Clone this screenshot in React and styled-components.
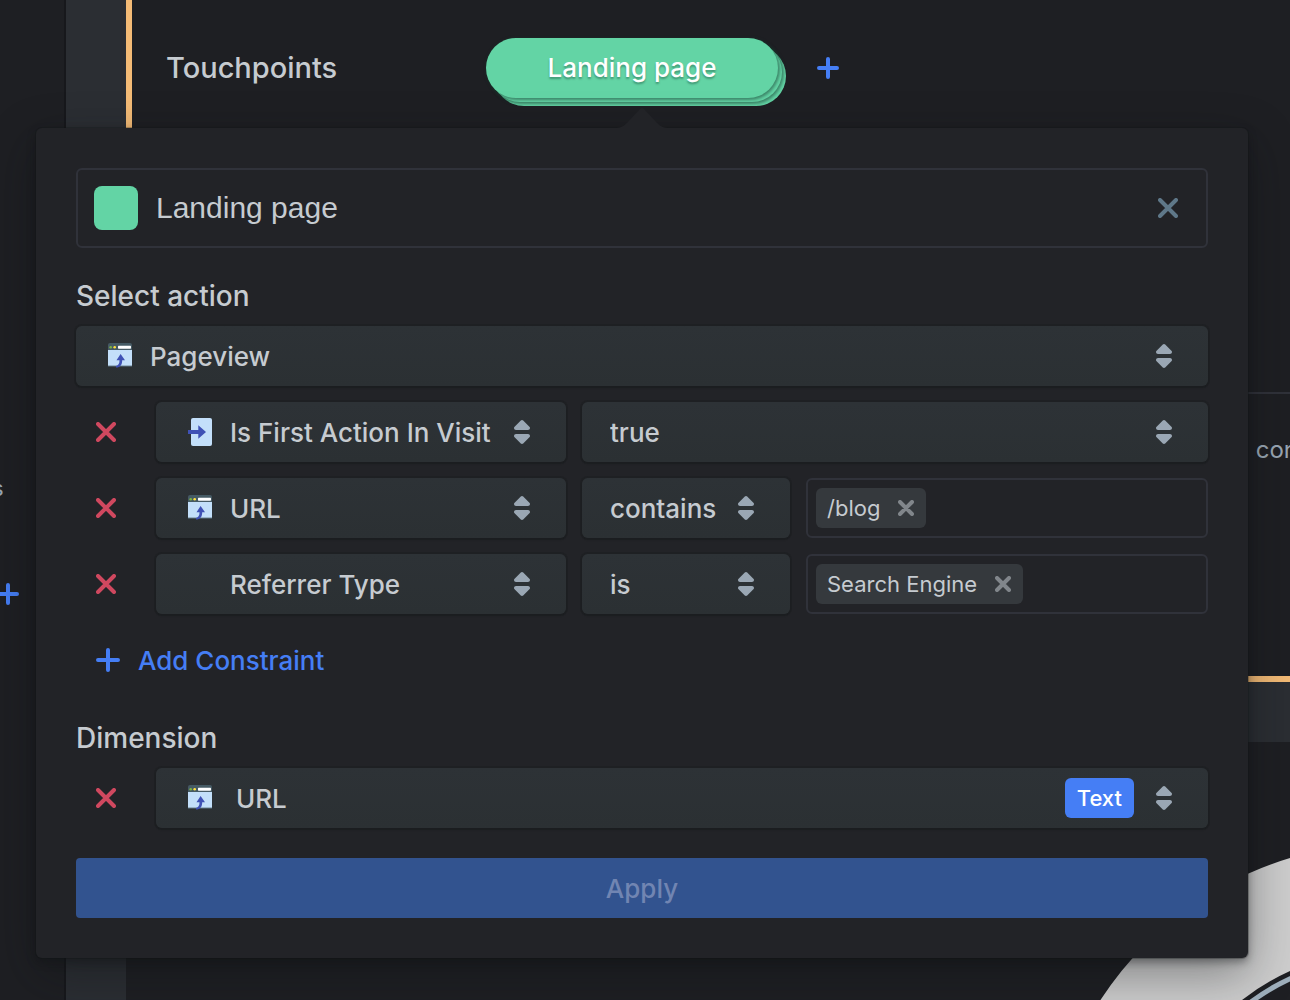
import React from 'react';
import styled, { createGlobalStyle, css } from 'styled-components';

const color = {
  page: '#1e1f23',
  band: '#2b2e33',
  panel: '#222327',
  line: '#30323a',
  text: '#c6cbd0',
  muted: '#9aa7b4',
  blue: '#457ef5',
  green: '#63d4a5',
  red: '#d0485f',
  orange: '#f4bb76',
};

const GlobalStyle = createGlobalStyle`
  *, *::before, *::after { box-sizing: border-box; }
  body {
    margin: 0;
    background: ${color.page};
    color: ${color.text};
    font-family: Inter, "Open Sans", sans-serif;
    font-size: 26px;
    font-weight: 500;
  }
  button, input, select { font: inherit; color: inherit; }
  svg { display: block; flex: none; }
`;

const Page = styled.div`
  position: relative;
  display: flex;
  height: 100vh;
  overflow: hidden;
`;

const Rail = styled.aside`
  flex: none;
  width: 66px;
  padding-top: 472px;
  border-right: 2px solid #17181c;
`;

const RailItems = styled.div`
  display: flex;
  flex-direction: column;
  gap: 80px;
  margin-left: -8px;
  font-size: 22px;
  font-weight: 400;
  line-height: 32px;
  color: ${color.muted};
`;

const Main = styled.main`
  flex: 1;
  min-width: 0;
  display: flex;
  flex-direction: column;
  gap: 60px;
  padding-left: 60px;
  background: ${color.band};
`;

const Card = styled.section`
  flex: none;
  border: solid ${color.orange};
  border-width: 0 0 6px 6px;
  background: ${color.page};
`;

const TouchpointRow = styled.div`
  display: flex;
  align-items: flex-start;
  min-height: 392px;
  padding: 38px 34px;
`;

const RowTitle = styled.h2`
  width: 320px;
  margin: 0;
  font-size: 29px;
  font-weight: 500;
  line-height: 60px;
`;

const StackedPill = styled.button`
  width: 292px;
  height: 60px;
  margin-right: 39px;
  padding: 0 0 2px;
  border: 0;
  border-radius: 30px;
  background: ${color.green};
  box-shadow:
    1px 1px 3px 1px rgba(24, 60, 48, 0.5),
    4px 4px 0 ${color.green},
    5px 5px 3px 1px rgba(24, 60, 48, 0.5),
    8px 8px 0 ${color.green};
  color: #fff;
  text-shadow: 0 2px 2px rgba(16, 60, 44, 0.4);
`;

const DetailRow = styled.div`
  display: flex;
  justify-content: flex-end;
  min-height: 284px;
  padding-top: 40px;
  border-top: 2px solid ${color.line};
  font-size: 24px;
  font-weight: 400;
  line-height: 32px;
  color: ${color.muted};
`;

const DetailText = styled.span`
  margin-right: -8px;
`;

const ChartSection = styled.section`
  flex: 1;
  display: flex;
  justify-content: flex-end;
  align-items: flex-start;
  padding-top: 102px;
  background: ${color.page};
`;

const ChartFrame = styled.div`
  margin-right: -438px;
`;

const IconButton = styled.button`
  display: flex;
  align-items: center;
  height: ${p => p.$height || 60}px;
  padding: 0;
  border: 0;
  background: none;
  color: ${p => p.$color};
`;

const RailButton = styled(IconButton)`
  width: 32px;
  justify-content: center;
`;

const Popover = styled.form`
  position: absolute;
  top: 128px;
  left: 36px;
  right: 42px;
  padding: 40px;
  border-radius: 6px;
  background: ${color.panel};
  box-shadow:
    0 0 0 1px rgba(16, 18, 20, 0.25),
    0 4px 8px rgba(16, 18, 20, 0.4),
    0 16px 48px rgba(16, 18, 20, 0.4);
`;

const PopoverTip = styled.svg`
  position: absolute;
  bottom: 100%;
  left: 50%;
  margin: 0 0 -1px -28px;
`;

const fieldFrame = css`
  display: flex;
  align-items: center;
  border: 2px solid ${color.line};
  border-radius: 6px;
`;

const NameField = styled.div`
  ${fieldFrame}
  height: 80px;
  padding: 0 28px 0 16px;
`;

const Swatch = styled.button`
  flex: none;
  width: 44px;
  height: 44px;
  padding: 0;
  border: 0;
  border-radius: 8px;
  background: ${color.green};
`;

const NameInput = styled.input`
  flex: 1;
  min-width: 0;
  padding: 0 18px;
  border: 0;
  outline: 0;
  background: none;
  font-family: "Liberation Sans", Arial, sans-serif;
  font-size: 30px;
  font-weight: 400;
`;

const SectionTitle = styled.h3`
  margin: 30px 0 12px;
  font-size: 28px;
  font-weight: 500;
  line-height: 36px;
`;

const Rows = styled.div`
  display: flex;
  flex-direction: column;
  gap: 16px;
`;

const Row = styled.div`
  display: flex;
  gap: 16px;
`;

const RemoveButton = styled(IconButton)`
  flex: none;
  width: 64px;
  padding-left: 20px;
`;

const SelectBox = styled.div`
  flex: ${p => (p.$width ? 'none' : 1)};
  width: ${p => (p.$width ? `${p.$width}px` : 'auto')};
  min-width: 0;
  display: grid;
  grid-template-columns: auto 1fr auto;
  align-items: center;
  height: 60px;
  border-radius: 6px;
  background: linear-gradient(#2d3236, #2b3033);
  box-shadow: 0 0 0 2px rgba(16, 18, 20, 0.2), 0 2px 2px rgba(16, 18, 20, 0.15);
`;

const NativeSelect = styled.select`
  grid-area: 1 / 1 / 2 / -1;
  width: 100%;
  height: 60px;
  padding: 1px 36px 0 ${p => p.$inset}px;
  border: 0;
  outline: 0;
  border-radius: 6px;
  appearance: none;
  background: none;
`;

const LeadingIcon = styled.span`
  grid-area: 1 / 1;
  padding-left: 32px;
  pointer-events: none;
`;

const Trailing = styled.span`
  grid-area: 1 / 3;
  display: flex;
  align-items: center;
  gap: 22px;
  padding-right: 36px;
  pointer-events: none;
`;

const TypeBadge = styled.span`
  padding: 0 12px;
  border-radius: 6px;
  background: ${color.blue};
  color: #fff;
  font-size: 22px;
  line-height: 40px;
`;

const TagField = styled.div`
  ${fieldFrame}
  flex: 1;
  min-width: 0;
  height: 60px;
  padding: 0 8px;
`;

const Tag = styled.span`
  flex: none;
  display: flex;
  align-items: center;
  gap: 18px;
  height: 40px;
  padding: 0 12px 0 11px;
  border-radius: 6px;
  background: #35393d;
  font-size: 22px;
  font-weight: 400;
`;

const TagInput = styled.input`
  flex: 1;
  min-width: 0;
  padding: 0 8px;
  border: 0;
  outline: 0;
  background: none;
  font-size: 22px;
`;

const AddButton = styled(IconButton)`
  gap: 18px;
  padding-left: 20px;
`;

const ApplyButton = styled.button`
  display: block;
  width: 100%;
  height: 60px;
  margin-top: 30px;
  padding: 0;
  border: 0;
  border-radius: 4px;
  background: #32538f;
  color: #7185b2;
`;

const Cross = ({ size = 20, stroke = 4 }) => (
  <svg width={size} height={size} viewBox={`0 0 ${size} ${size}`} fill="none" stroke="currentColor" strokeWidth={stroke} strokeLinecap="round" aria-hidden="true">
    <path d={`M2 2L${size - 2} ${size - 2}M${size - 2} 2L2 ${size - 2}`} />
  </svg>
);

const Plus = ({ size = 22 }) => (
  <svg width={size} height={size} viewBox={`0 0 ${size} ${size}`} fill="none" stroke="currentColor" strokeWidth="4" strokeLinecap="round" aria-hidden="true">
    <path d={`M2 ${size / 2}H${size - 2}M${size / 2} 2V${size - 2}`} />
  </svg>
);

const DoubleCaret = () => (
  <svg width="16" height="24" viewBox="0 0 16 24" fill={color.muted} aria-hidden="true">
    <path d="M8 0c.5 0 .9.2 1.200.5l6.200 6.200c.4.4.6.8.6 1.300 0 1.100-.9 2-2 2H2c-1.100 0-2-.9-2-2 0-.5.2-.9.6-1.300L6.800.5C7.100.2 7.500 0 8 0z" />
    <path d="M8 24c.5 0 .9-.2 1.200-.5l6.200-6.200c.4-.4.6-.8.6-1.300 0-1.100-.9-2-2-2H2c-1.100 0-2 .9-2 2 0 .5.2.9.6 1.300l6.200 6.200c.3.3.7.5 1.200.5z" />
  </svg>
);

const WindowIcon = () => (
  <svg width="24" height="26" viewBox="0 0 24 26" aria-hidden="true">
    <path d="M0 2a2 2 0 0 1 2-2h20a2 2 0 0 1 2 2v5H0z" fill="#455a64" />
    <path d="M0 7h24v16H0z" fill="#c3dffa" />
    <path d="M0 22.600h24v1H0z" fill="#566b78" />
    <circle cx="2.700" cy="4.200" r="1.300" fill="#7cb342" />
    <circle cx="6.700" cy="4.200" r="1.300" fill="#ffdf3d" />
    <rect x="10" y="2.700" width="13" height="3" rx=".6" fill="#fff" />
    <path d="M12.600 11l4.400 6.200h-2.800c0 4.300-1.800 7.300-6.200 7.300v-1.600c2.600-.4 3.500-2.600 3.500-5.700H8.500z" fill="#3f51b5" />
  </svg>
);

const EnterIcon = () => (
  <svg width="24" height="28" viewBox="0 0 24 28" aria-hidden="true">
    <rect x="3" width="21" height="28" rx="2" fill="#c3dffa" />
    <path d="M0 12h10.300V7.300L18 14l-7.700 6.700V16H0z" fill="#3f51b5" />
  </svg>
);

const Donut = () => (
  <svg width="682" height="682" viewBox="0 0 682 682" fill="none" aria-hidden="true">
    <circle cx="341" cy="341" r="288" stroke="#cdcdcd" strokeWidth="106" />
    <circle cx="341" cy="341" r="228" stroke="#9fb0bd" strokeWidth="5" />
  </svg>
);

function Dropdown({ label, value, width, inset = 74, icon, badge }) {
  return (
    <SelectBox $width={width}>
      <NativeSelect aria-label={label} defaultValue={value} $inset={inset}>
        <option>{value}</option>
      </NativeSelect>
      {icon && <LeadingIcon>{icon}</LeadingIcon>}
      <Trailing>
        {badge && <TypeBadge>{badge}</TypeBadge>}
        <DoubleCaret />
      </Trailing>
    </SelectBox>
  );
}

function Remove({ label }) {
  return (
    <RemoveButton type="button" aria-label={label} $color={color.red}>
      <Cross />
    </RemoveButton>
  );
}

const constraints = [
  { property: 'Is First Action In Visit', icon: <EnterIcon />, match: 'true' },
  { property: 'URL', icon: <WindowIcon />, match: 'contains', tag: '/blog' },
  { property: 'Referrer Type', match: 'is', tag: 'Search Engine' },
];

function Constraint({ property, icon, match, tag }) {
  return (
    <Row>
      <Remove label={`Remove ${property}`} />
      <Dropdown label="Property" value={property} width={410} icon={icon} />
      <Dropdown label="Match" value={match} width={tag ? 208 : undefined} inset={28} />
      {tag && (
        <TagField>
          <Tag>
            {tag}
            <IconButton type="button" aria-label={`Remove ${tag}`} $height={40} $color="#81868b">
              <Cross size={16} />
            </IconButton>
          </Tag>
          <TagInput aria-label={`${property} values`} />
        </TagField>
      )}
    </Row>
  );
}

export default function App() {
  return (
    <>
      <GlobalStyle />
      <Page>
        <Rail>
          <RailItems>
            <span>s</span>
            <RailButton type="button" aria-label="Add" $height={20} $color={color.blue}>
              <Plus />
            </RailButton>
          </RailItems>
        </Rail>
        <Main>
          <Card>
            <TouchpointRow>
              <RowTitle>Touchpoints</RowTitle>
              <StackedPill type="button">Landing page</StackedPill>
              <IconButton type="button" aria-label="Add touchpoint" $color={color.blue}>
                <Plus />
              </IconButton>
            </TouchpointRow>
            <DetailRow>
              <DetailText>con</DetailText>
            </DetailRow>
          </Card>
          <ChartSection>
            <ChartFrame>
              <Donut />
            </ChartFrame>
          </ChartSection>
        </Main>

        <Popover onSubmit={e => e.preventDefault()}>
          <PopoverTip width="56" height="22" viewBox="0 0 56 22" aria-hidden="true">
            <path d="M0 22v-1c6 0 9-1 13-5L26 2q2-2 4 0l13 14c4 4 7 5 13 5v1z" fill={color.panel} />
          </PopoverTip>
          <NameField>
            <Swatch type="button" aria-label="Colour" />
            <NameInput aria-label="Touchpoint name" defaultValue="Landing page" />
            <IconButton type="button" aria-label="Close" $color="#5f7889">
              <Cross />
            </IconButton>
          </NameField>

          <SectionTitle>Select action</SectionTitle>
          <Rows>
            <Row>
              <Dropdown label="Action" value="Pageview" icon={<WindowIcon />} />
            </Row>
            {constraints.map(c => (
              <Constraint key={c.property} {...c} />
            ))}
            <AddButton type="button" $color={color.blue}>
              <Plus size={24} />
              Add Constraint
            </AddButton>
          </Rows>

          <SectionTitle>Dimension</SectionTitle>
          <Row>
            <Remove label="Remove dimension" />
            <Dropdown label="Dimension" value="URL" inset={80} icon={<WindowIcon />} badge="Text" />
          </Row>

          <ApplyButton type="submit" disabled>Apply</ApplyButton>
        </Popover>
      </Page>
    </>
  );
}
